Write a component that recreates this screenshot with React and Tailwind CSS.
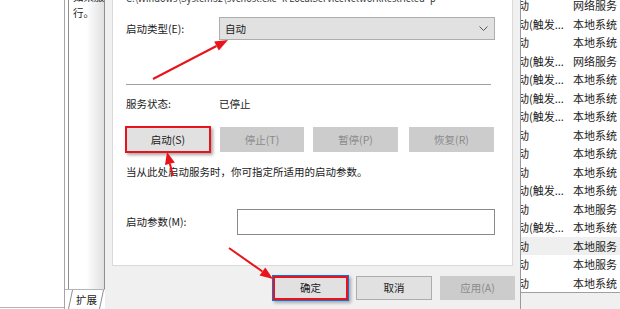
import React from 'react';

const rows = [
  ['动', '网络服务'],
  ['动(触发...', '本地系统'],
  ['动', '本地系统'],
  ['动(触发...', '网络服务'],
  ['动(触发...', '本地系统'],
  ['动(触发...', '本地系统'],
  ['动(触发...', '本地系统'],
  ['动', '本地系统'],
  ['动', '本地系统'],
  ['动', '本地系统'],
  ['动(触发...', '本地系统'],
  ['动', '本地服务'],
  ['动(触发...', '本地系统'],
  ['动', '本地服务', true],
  ['动', '本地服务'],
  ['动', '本地系统'],
];

const Arrows = () => (
  <svg className="absolute inset-0 pointer-events-none" width="620" height="309" viewBox="0 0 620 309">
    <g stroke="#e8141b" strokeWidth="2" fill="#e8141b">
      <line x1="153" y1="79" x2="216.5" y2="46" />
      <polygon points="228,40 218.8,50.4 214.2,41.6" stroke="none" />
      <line x1="173" y1="176" x2="169.9" y2="163.7" />
      <polygon points="167,152 174.8,162.5 165,164.9" stroke="none" />
      <line x1="229" y1="248" x2="262.4" y2="271.5" />
      <polygon points="273,279 259.5,275.6 265.3,267.4" stroke="none" />
    </g>
  </svg>
);

const SmallButton = ({ children, disabled, className = '' }) => (
  <div
    className={`flex items-center justify-center text-[10.5px] leading-[14px] ${
      disabled ? 'bg-[#cccccc] text-[#8a8a8a]' : 'bg-[#e1e1e1] border border-[#adadad] text-[#1a1a1a]'
    } ${className}`}
  >
    {children}
  </div>
);

export default function App() {
  return (
    <div className="relative flex w-[620px] h-[309px] overflow-hidden bg-white text-[#1a1a1a] font-['Microsoft_YaHei','Noto_Sans_CJK_SC',sans-serif]">
      {/* console tree pane */}
      <div className="w-[65px] h-full flex flex-col border-r border-[#a5a5a5]">
        <div className="flex-1" />
        <div className="h-[2px] border-t border-[#b5b5b5]" />
      </div>

      {/* description pane */}
      <div className="w-[40px] h-full flex flex-col">
        <div className="flex-1 ml-[3px] border-l border-r border-[#8f8f8f] bg-gradient-to-r from-white via-white to-[#e0e0e0] pl-[4px] text-[10.5px] leading-[16px] overflow-hidden">
          <div className="-mt-[11px] whitespace-nowrap">如果服务</div>
          <div>行。</div>
        </div>
        <div className="h-[20px] flex border-t border-[#b5b5b5]">
          <div className="ml-[5px] w-[32px] -skew-x-[12deg] border-l border-r border-[#8f8f8f] bg-white flex items-center justify-center">
            <span className="skew-x-[12deg] text-[10.5px] leading-[12px]">扩展</span>
          </div>
        </div>
      </div>

      {/* properties dialog */}
      <div className="w-[415px] h-full bg-[#f0f0f0] flex flex-col">
        <div className="ml-[7px] w-[401px] h-[266px] bg-white border-l border-r border-b border-[#d9d9d9] flex flex-col pl-[13px] text-[10.5px]">
          <div className="-mt-[9px] h-[14px] leading-[14px] whitespace-nowrap text-[#333] text-[9.3px]">
            C:\Windows\System32\svchost.exe -k LocalServiceNetworkRestricted -p
          </div>

          <div className="mt-[12px] h-[23px] flex items-center">
            <div className="w-[93px] leading-[14px]">启动类型(E):</div>
            <div className="w-[276px] h-[23px] bg-[#e1e1e1] border border-[#adadad] flex items-center justify-between pl-[5px] pr-[6px]">
              <span className="leading-[14px]">自动</span>
              <svg width="9" height="6" viewBox="0 0 9 6">
                <polyline points="0.5,0.5 4.5,4.5 8.5,0.5" fill="none" stroke="#555" strokeWidth="1" />
              </svg>
            </div>
          </div>

          <div className="mt-[44px] w-[365px] h-px bg-[#a0a0a0]" />

          <div className="mt-[11px] h-[16px] flex items-center">
            <div className="w-[93px] leading-[14px]">服务状态:</div>
            <div className="leading-[14px]">已停止</div>
          </div>

          <div className="mt-[15px] h-[25px] flex items-center">
            <div className="w-[86px] h-[27px] -ml-[1px] border-2 border-[#e8141b] bg-[#e1e1e1] flex items-center justify-center text-[10.5px] leading-[14px] shadow-[2px_2px_3px_rgba(0,0,0,0.35)]">
              启动(S)
            </div>
            <SmallButton disabled className="ml-[9px] w-[84px] h-[25px]">停止(T)</SmallButton>
            <SmallButton disabled className="ml-[9px] w-[85px] h-[25px]">暂停(P)</SmallButton>
            <SmallButton disabled className="ml-[11px] w-[85px] h-[25px]">恢复(R)</SmallButton>
          </div>

          <div className="mt-[12px] h-[16px] leading-[16px] whitespace-nowrap">
            当从此处启动服务时，你可指定所适用的启动参数。
          </div>

          <div className="mt-[29px] h-[26px] flex items-center">
            <div className="w-[111px] leading-[14px]">启动参数(M):</div>
            <div className="w-[258px] h-[26px] bg-white border border-[#8a8a8a]" />
          </div>
        </div>

        <div className="mt-[10px] flex justify-end pr-[5px] gap-[7px]">
          <div className="w-[77px] h-[26px] -mt-[1px] border border-[#1a6fd6] bg-[#e1e1e1] flex items-center justify-center text-[10.5px] leading-[14px] shadow-[inset_0_0_0_2px_#e8141b,2px_2px_3px_rgba(0,0,0,0.3)]">
            确定
          </div>
          <SmallButton className="w-[76px] h-[24px]">取消</SmallButton>
          <SmallButton disabled className="ml-[1px] w-[75px] h-[24px]">应用(A)</SmallButton>
        </div>
      </div>

      {/* services list */}
      <div className="flex-1 h-full border-l border-[#9a9a9a] flex flex-col overflow-hidden">
        <div className="-mt-[4px] flex flex-col">
          {rows.map(([start, account, hl], i) => (
            <div key={i} className={`h-[18.5px] flex items-center text-[11px] leading-[14px] whitespace-nowrap ${hl ? 'bg-[#efefef]' : ''}`}>
              <div className="w-[52px] -ml-[3px] overflow-hidden">{start}</div>
              <div className="ml-[3px]">{account}</div>
            </div>
          ))}
        </div>
        <div className="flex-1 border-t border-[#a0a0a0] bg-[#f0f0f0]" />
      </div>

      <Arrows />
    </div>
  );
}
